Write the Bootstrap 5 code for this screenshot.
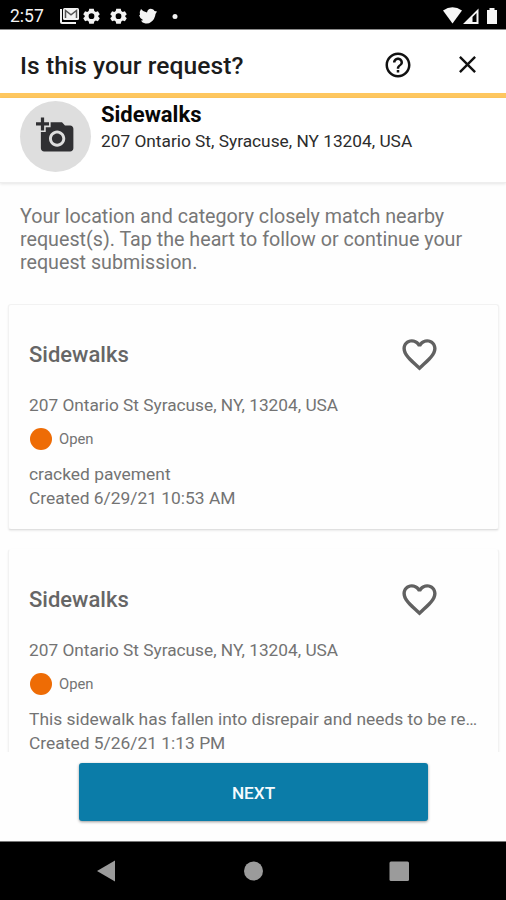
<!DOCTYPE html>
<html lang="en">
<head>
<meta charset="utf-8">
<meta name="viewport" content="width=device-width, initial-scale=1">
<title>Is this your request?</title>
<link href="https://cdn.jsdelivr.net/npm/bootstrap@5.3.0/dist/css/bootstrap.min.css" rel="stylesheet">
<style>
body{font-family:Roboto,sans-serif;width:506px;height:900px;overflow:hidden;color:#737373;background:#fefefe}
svg{display:block;flex:none}
.status{height:30px;background:#000;border-bottom:1px solid #8a8a8a;padding:2px 7px 0 10px;color:#f4f4f4}
.clock{font-size:17.5px;line-height:27px;width:49px;padding-top:1px}
.appbar{height:68px;padding:6px 24px 0 20px;border-bottom:5px solid #fec75f;background:#fff}
.appbar h1{font-size:24.6px;font-weight:500;color:#1c1c1c;line-height:30px;letter-spacing:.06px;padding-top:2px}
.help{margin-right:40px}
.who{height:85px;padding:3px 20px 0;background:#fff;border-bottom:1px solid #eee;box-shadow:0 1px 3px rgba(0,0,0,.1)}
.avatar{width:71px;height:71px;background:#dedede;margin-right:10px}
.who h2{font-size:22px;font-weight:700;color:#080808;line-height:26px;margin:1px 0 0}
.who p{font-size:17.3px;color:#2c2c2c;line-height:24px;margin:1px 0 0}
.intro{font-size:19.7px;line-height:23px;padding:22px 20px 0;height:121px;color:#777}
.feed{height:448px;padding:0 7px 0 8px}
.request{height:226px;margin-bottom:19px;border:1px solid #f2f2f2;border-bottom-color:#e0e0e0;border-radius:3px;background:#fefefe;padding:29px 20px 0;box-shadow:0 1px 2px rgba(0,0,0,.08)}
.request+.request{border-top-color:transparent;height:240px}
.request h3{font-size:22px;font-weight:500;line-height:36px;color:#666;width:370px}
.request p{font-size:17.4px;line-height:24px;margin:0}
.request .place{margin-top:18px;font-size:17.27px}
.request .created{line-height:18px;margin-top:3px}
.state{font-size:14.8px;height:24px;margin:10px 0 11px;padding-left:1px}
.dot{width:22px;height:22px;background:#ee6c05;margin-right:7px}
.actions{height:89px;padding-top:11px;background:#fefefe}
.btn-next{width:349px;height:58px;background:#0b7ca8;color:#f5fbfd;font-size:17.2px;font-weight:500;border-radius:3px;border:0;padding:9px 12px 6px 13px;box-shadow:0 1px 3px rgba(0,0,0,.4)}
.btn-next:hover{background:#096a90;color:#fff}
.sysnav{height:59px;background:#000;border-top:1px solid #777}
</style>
</head>
<body>
<div class="d-flex flex-column">
<div class="status d-flex align-items-center">
  <span class="clock">2:57</span>
  <svg width="132" height="24" viewBox="0 0 132 24" fill="#f2f2f2">
    <path d="M1 5v13q0 2 2 2h14v-2H3V5z"/><rect x="4" y="4" width="16" height="12" rx="1.5"/>
    <path d="M6.500 14V6.500l5.500 4.300 5.500-4.300V14" fill="none" stroke="#555" stroke-width="1.500"/>
    <g id="gear" transform="translate(3.250 1.220) scale(.9)"><path fill-rule="evenodd" d="M30 4h5l.6 2.500 1.600.9 2.400-.8 2.100 3.400-1.700 1.600v1.300l1.700 1.600-2.100 3.400-2.400-.8-1.600.9-.6 2.500h-5l-.6-2.500-1.600-.9-2.400.8-2.100-3.400 1.700-1.600v-1.300l-1.700-1.600 2.100-3.400 2.400.8 1.600-.9zM32.500 9a3.200 3.200 0 1 0 0 6.400 3.200 3.200 0 0 0 0-6.400z"/></g>
    <use href="#gear" x="27"/>
    <path d="M82 5q2 3 6 3.500Q89 4 93 5q2 .5 2.500 2L98 7.500l-1.500 2.500Q96 15 92 18q-3 2.500-7 1-2-.5-3-2.500 1.500 0 2-.5-3.500-2-4-5l1 .2Q80 8 82 5z"/>
    <circle cx="116" cy="12.500" r="2.500"/>
  </svg>
  <svg class="ms-auto" width="56" height="24" viewBox="0 0 56 24" fill="#f7f7f7">
    <path d="M0 6.500Q9.500 0 19 6.500L9.500 19.500z"/>
    <path fill-rule="evenodd" d="M20 20 35.500 4.500V20zM29.500 13v5h4v-9z"/>
    <path d="M44 6h2.500V4h5v2H54v14H44z"/>
  </svg>
</div>
<header class="appbar d-flex align-items-center">
  <h1 class="mb-0 me-auto">Is this your request?</h1>
  <svg width="30" height="30" viewBox="0 0 24 24" fill="#111" class="help"><path d="M11 18h2v-2h-2v2zm1-16C6.480 2 2 6.480 2 12s4.480 10 10 10 10-4.480 10-10S17.520 2 12 2zm0 18c-4.410 0-8-3.590-8-8s3.590-8 8-8 8 3.590 8 8-3.590 8-8 8zm0-14c-2.210 0-4 1.790-4 4h2c0-1.100.9-2 2-2s2 .9 2 2c0 2-3 1.750-3 5h2c0-2.250 3-2.500 3-5 0-2.210-1.790-4-4-4z"/></svg>
  <svg width="29" height="29" viewBox="0 0 24 24" fill="#111"><path d="M19 6.410 17.590 5 12 10.590 6.410 5 5 6.410 10.590 12 5 17.590 6.410 19 12 13.410 17.590 19 19 17.590 13.410 12z"/></svg>
</header>
<section class="who d-flex">
  <div class="avatar rounded-circle d-flex align-items-center justify-content-center flex-shrink-0">
    <svg width="39" height="39" viewBox="0 0.7 24 24" fill="#303033"><path d="M3 4V1h2v3h3v2H5v3H3V6H0V4h3zm3 6V7h3V4h7l1.830 2H21c1.100 0 2 .9 2 2v12c0 1.100-.9 2-2 2H5c-1.100 0-2-.9-2-2V10h3zm7 9c2.760 0 5-2.240 5-5s-2.240-5-5-5-5 2.240-5 5 2.240 5 5 5zm-3.200-5c0 1.770 1.430 3.200 3.200 3.200s3.200-1.430 3.200-3.200-1.430-3.200-3.200-3.200-3.200 1.430-3.200 3.200z"/></svg>
  </div>
  <div><h2>Sidewalks</h2><p>207 Ontario St, Syracuse, NY 13204, USA</p></div>
</section>
<p class="intro mb-0">Your location and category closely match nearby<br>request(s). Tap the heart to follow or continue your<br>request submission.</p>
<main class="feed overflow-hidden">
  <article class="request">
    <div class="d-flex align-items-center"><h3 class="mb-0">Sidewalks</h3>
    <svg width="41" height="41" viewBox="0 0 24 24" fill="#616161"><path id="heart" d="M16.500 3c-1.740 0-3.410.81-4.500 2.090C10.910 3.810 9.240 3 7.500 3 4.420 3 2 5.420 2 8.500c0 3.780 3.400 6.860 8.550 11.540L12 21.350l1.450-1.320C18.600 15.360 22 12.280 22 8.500 22 5.420 19.580 3 16.500 3zm-4.400 15.550-.1.100-.1-.1C7.140 14.240 4 11.390 4 8.500 4 6.500 5.500 5 7.500 5c1.540 0 3.040.99 3.570 2.360h1.870C13.460 5.990 14.960 5 16.500 5c2 0 3.500 1.500 3.500 3.500 0 2.890-3.140 5.740-7.900 10.050z"/></svg></div>
    <p class="place">207 Ontario St Syracuse, NY, 13204, USA</p>
    <div class="state d-flex align-items-center"><span class="dot rounded-circle"></span>Open</div>
    <p>cracked pavement</p><p class="created">Created 6/29/21 10:53 AM</p>
  </article>
  <article class="request">
    <div class="d-flex align-items-center"><h3 class="mb-0">Sidewalks</h3>
    <svg width="41" height="41" viewBox="0 0 24 24" fill="#616161"><use href="#heart"/></svg></div>
    <p class="place">207 Ontario St Syracuse, NY, 13204, USA</p>
    <div class="state d-flex align-items-center"><span class="dot rounded-circle"></span>Open</div>
    <p class="text-nowrap">This sidewalk has fallen into disrepair and needs to be re…</p><p class="created">Created 5/26/21 1:13 PM</p>
  </article>
</main>
<div class="actions d-flex justify-content-center align-items-start"><button class="btn btn-next">NEXT</button></div>
<nav class="sysnav">
  <svg width="506" height="58" viewBox="0 0 506 58" fill="#9b9b9b"><path d="M97 29 115 18.500v21z"/><circle cx="253.500" cy="29" r="9.500"/><rect x="389.500" y="19.500" width="19.500" height="19.500" rx="1.500"/></svg>
</nav>
</div>
<script src="https://cdn.jsdelivr.net/npm/bootstrap@5.3.0/dist/js/bootstrap.bundle.min.js"></script>
</body>
</html>
